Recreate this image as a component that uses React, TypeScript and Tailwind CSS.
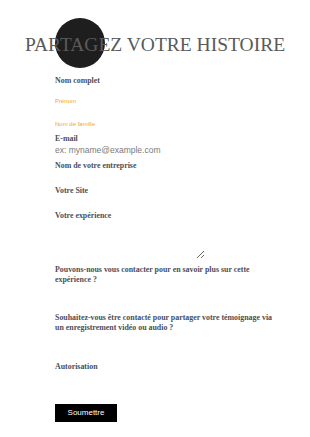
import React from "react";

const serif = { fontFamily: '"Liberation Serif", "Times New Roman", serif' };
const sans = { fontFamily: '"Liberation Sans", Arial, sans-serif' };

function Label({ children, className = "" }: { children: React.ReactNode; className?: string }) {
  return (
    <div
      className={`text-[7.9px] leading-[10px] font-bold text-[#4b4f58] ${className}`}
      style={serif}
    >
      {children}
    </div>
  );
}

export default function App() {
  return (
    <div className="relative w-[310px] h-[437px] bg-white overflow-hidden">
      <div className="absolute left-[55px] top-[18px] w-[50px] h-[50px] rounded-full bg-[#1e1e1e]" />
      <h1
        className="relative pt-[34px] text-center text-[19.5px] leading-[22px] text-[#5a5a5a] font-normal"
        style={serif}
      >
        PARTAGEZ VOTRE HISTOIRE
      </h1>
      <form className="pl-[55px] pr-[32px] flex flex-col items-start" onSubmit={(e) => e.preventDefault()}>
        <Label className="mt-[20px]">Nom complet</Label>
        <div className="mt-[11px] text-[6px] leading-[8px] text-[#f5a623]" style={sans}>
          Prénom
        </div>
        <div className="mt-[15px] text-[6px] leading-[8px] text-[#f5a623]" style={sans}>
          Nom de famille
        </div>
        <Label className="mt-[6px]">E-mail</Label>
        <div className="mt-[1px] text-[8.5px] leading-[10px] text-[#7a7a7a]" style={sans}>
          ex: myname@example.com
        </div>
        <Label className="mt-[6px]">Nom de votre entreprise</Label>
        <Label className="mt-[15px]">Votre Site</Label>
        <Label className="mt-[15px]">Votre expérience</Label>
        <textarea
          className="mt-[2px] w-[150px] h-[36px] border-0 bg-transparent outline-none resize p-0"
          aria-label="Votre expérience"
        />
        <Label className="mt-[6px] leading-[9px]">
          Pouvons-nous vous contacter pour en savoir plus sur cette expérience ?
        </Label>
        <Label className="mt-[28px] leading-[9px]">
          Souhaitez-vous être contacté pour partager votre témoignage via un enregistrement vidéo ou audio ?
        </Label>
        <Label className="mt-[29px]">Autorisation</Label>
        <button
          type="submit"
          className="mt-[32px] w-[62px] h-[18px] bg-black text-white text-[8px] leading-[18px] text-center"
          style={sans}
        >
          Soumettre
        </button>
      </form>
    </div>
  );
}
